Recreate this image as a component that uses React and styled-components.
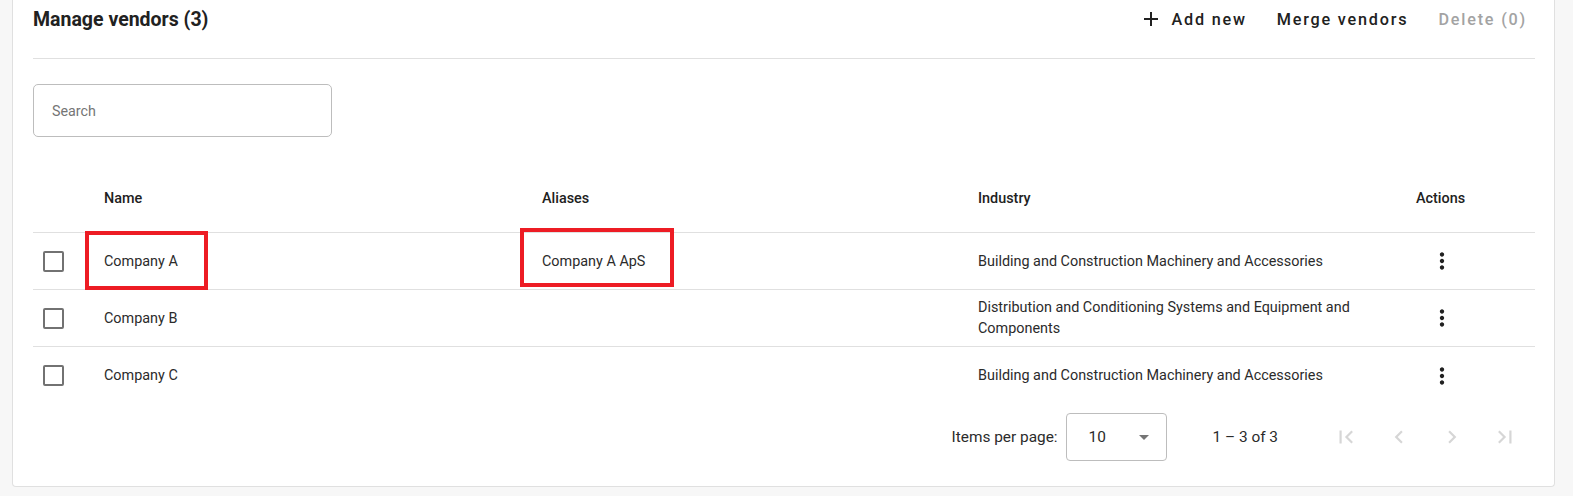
import React from 'react';
import styled, { createGlobalStyle } from 'styled-components';
import { MdAdd, MdMoreVert, MdFirstPage, MdLastPage, MdChevronLeft, MdChevronRight } from 'react-icons/md';

const GlobalStyle = createGlobalStyle`
  html, body {
    margin: 0;
    padding: 0;
    background: #f7f7f7;
    font-family: Roboto, "Liberation Sans", Arial, sans-serif;
    color: #212121;
  }
`;

const Page = styled.div`
  padding: 0 18px 9px 12px;
`;

const Card = styled.section`
  background: #fff;
  border: 1px solid #e0e0e0;
  border-top: none;
  border-radius: 0 0 4px 4px;
  padding: 0 19px 16px 20px;
`;

const Header = styled.div`
  display: flex;
  align-items: center;
  justify-content: space-between;
  height: 38px;
`;

const Title = styled.h1`
  margin: 0;
  font-size: 19.5px;
  font-weight: 700;
  color: #212121;
`;

const Toolbar = styled.div`
  display: flex;
  align-items: center;
  gap: 30px;
  padding-right: 8px;
`;

const TextButton = styled.button`
  display: flex;
  align-items: center;
  gap: 8px;
  border: none;
  background: none;
  padding: 0;
  font-family: inherit;
  font-size: 16.2px;
  font-weight: 500;
  letter-spacing: 1.8px;
  color: ${p => (p.disabled ? '#a3a3a3' : '#212121')};
  cursor: ${p => (p.disabled ? 'default' : 'pointer')};
`;

const Divider = styled.hr`
  margin: 20px 0 0;
  border: none;
  border-top: 1px solid #e0e0e0;
`;

const SearchBox = styled.input`
  display: block;
  box-sizing: border-box;
  width: 299px;
  height: 53px;
  margin: 25px 0 28px;
  padding: 0 18px;
  border: 1px solid #bdbdbd;
  border-radius: 5px;
  font-family: inherit;
  font-size: 14.3px;
  color: #212121;
  outline: none;

  &::placeholder {
    color: #757575;
  }
`;

const Row = styled.div`
  display: grid;
  grid-template-columns: 55px 438px 436px 438px 1fr;
  align-items: center;
  height: ${p => (p.head ? '68px' : '57px')};
  border-bottom: ${p => (p.last ? 'none' : '1px solid #e0e0e0')};
  box-sizing: border-box;
  font-size: 14.4px;
  font-weight: ${p => (p.head ? 500 : 400)};
  color: ${p => (p.head ? '#212121' : '#2b2b2b')};
`;

const Cell = styled.div`
  padding: 0 16px;
  line-height: 21px;
`;

const CheckCell = styled.div`
  padding-left: 10px;
  display: flex;
  align-items: center;
`;

const Checkbox = styled.span`
  display: block;
  box-sizing: border-box;
  width: 21px;
  height: 21px;
  border: 2px solid #727272;
  border-radius: 2px;
`;

const Marked = styled.span`
  position: relative;
  display: inline-block;

  &::after {
    content: '';
    position: absolute;
    left: ${p => p.l}px;
    right: ${p => p.r}px;
    top: ${p => p.t}px;
    bottom: ${p => p.b}px;
    border: 4px solid #ed1c24;
  }
`;

const IconButton = styled.button`
  display: flex;
  align-items: center;
  justify-content: center;
  width: ${p => p.w || 52}px;
  height: 44px;
  border: none;
  background: none;
  padding: 0;
  color: ${p => (p.disabled ? '#d6d6d6' : '#212121')};
`;

const Paginator = styled.div`
  display: flex;
  align-items: center;
  justify-content: flex-end;
  height: 66px;
  padding-right: 4px;
  font-size: 15.4px;
  color: #2b2b2b;
`;

const PageLabel = styled.span`
  margin-right: 8px;
`;

const Select = styled.div`
  box-sizing: border-box;
  display: flex;
  align-items: center;
  justify-content: space-between;
  width: 101px;
  height: 48px;
  padding: 0 17px 0 22px;
  border: 1px solid #bdbdbd;
  border-radius: 4px;
`;

const Caret = styled.span`
  width: 0;
  height: 0;
  border-left: 5.5px solid transparent;
  border-right: 5.5px solid transparent;
  border-top: 5.5px solid #757575;
`;

const RangeLabel = styled.span`
  margin: 0 41px 0 46px;
`;

const vendors = [
  {
    name: 'Company A',
    alias: 'Company A ApS',
    industry: 'Building and Construction Machinery and Accessories',
    marked: true,
  },
  {
    name: 'Company B',
    alias: '',
    industry: 'Distribution and Conditioning Systems and Equipment and Components',
  },
  {
    name: 'Company C',
    alias: '',
    industry: 'Building and Construction Machinery and Accessories',
  },
];

const App = () => (
  <Page>
    <GlobalStyle />
    <Card>
      <Header>
        <Title>Manage vendors (3)</Title>
        <Toolbar>
          <TextButton>
            <MdAdd size={24} />
            Add new
          </TextButton>
          <TextButton>Merge vendors</TextButton>
          <TextButton disabled>Delete (0)</TextButton>
        </Toolbar>
      </Header>
      <Divider />
      <SearchBox placeholder="Search" />

      <Row head>
        <span />
        <Cell>Name</Cell>
        <Cell>Aliases</Cell>
        <Cell>Industry</Cell>
        <Cell>Actions</Cell>
      </Row>
      {vendors.map((v, i) => (
        <Row key={v.name} last={i === vendors.length - 1}>
          <CheckCell>
            <Checkbox />
          </CheckCell>
          <Cell>
            {v.marked ? <Marked l={-19} r={-30} t={-20} b={-18}>{v.name}</Marked> : v.name}
          </Cell>
          <Cell>
            {v.marked ? <Marked l={-22} r={-29} t={-23} b={-15}>{v.alias}</Marked> : v.alias}
          </Cell>
          <Cell>{v.industry}</Cell>
          <Cell>
            <IconButton>
              <MdMoreVert size={26} />
            </IconButton>
          </Cell>
        </Row>
      ))}

      <Paginator>
        <PageLabel>Items per page:</PageLabel>
        <Select>
          10
          <Caret />
        </Select>
        <RangeLabel>1 – 3 of 3</RangeLabel>
        <IconButton w={53} disabled><MdFirstPage size={26} /></IconButton>
        <IconButton w={53} disabled><MdChevronLeft size={26} /></IconButton>
        <IconButton w={53} disabled><MdChevronRight size={26} /></IconButton>
        <IconButton w={53} disabled><MdLastPage size={26} /></IconButton>
      </Paginator>
    </Card>
  </Page>
);

export default App;
